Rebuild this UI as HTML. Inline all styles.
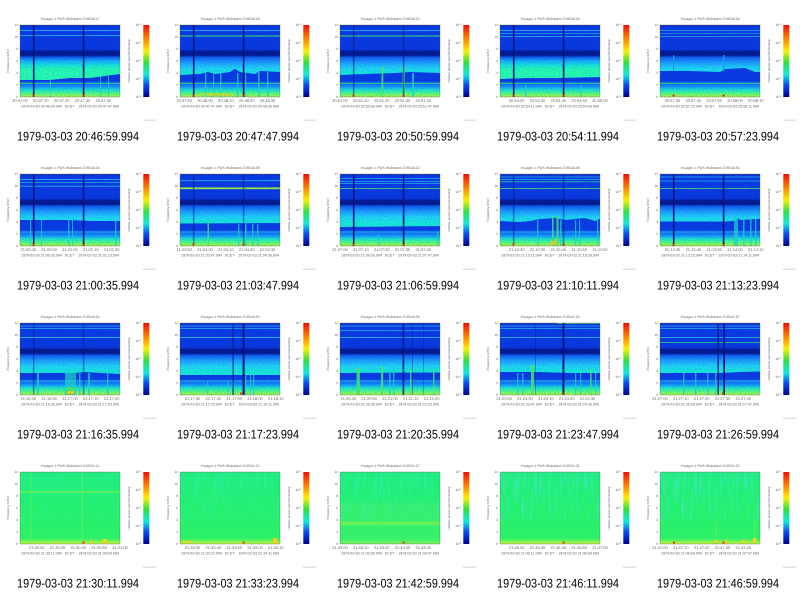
<!DOCTYPE html>
<html><head><meta charset="utf-8"><title>Voyager-1 PWS Wideband</title>
<style>
html,body{margin:0;padding:0;background:#fff;width:800px;height:596px;overflow:hidden}
svg{display:block}
svg svg{filter:blur(.38px)}
text{font-family:"Liberation Sans",sans-serif;text-rendering:geometricPrecision}
.f text,.f{font-size:3.2px;fill:#666}
text[y="20"]{font-size:3.44px}
text[y="102"]{font-size:4px}
text[y="107.5"]{font-size:3.65px}
.m{text-anchor:middle}
.e{text-anchor:end}
.cap{font-size:12.6px;fill:#000}
.s{fill:#20d8c8;opacity:.75}.g{fill:#50f060;opacity:.85}.l{fill:#30d8e0}.k{fill:#40f070}.y{fill:#a8f038}.o{fill:#f8d020}.r{fill:#f03010}.v{fill:#06107c}.c{fill:#18a0f0}
</style></head><body>
<svg width="800" height="596" viewBox="0 0 800 596" xmlns="http://www.w3.org/2000/svg">
<defs>
<linearGradient id="S" x1="0" y1="0" x2="0" y2="1"><stop offset="0" stop-color="#0620a8"/><stop offset=".03" stop-color="#0a38e8"/><stop offset=".34" stop-color="#0a34dc"/><stop offset=".37" stop-color="#05148c"/><stop offset=".42" stop-color="#05148c"/><stop offset=".45" stop-color="#1060f0"/><stop offset=".5" stop-color="#18b0ff"/><stop offset=".56" stop-color="#18e8d8"/><stop offset=".62" stop-color="#28ffb0"/><stop offset="1" stop-color="#28ffb0"/></linearGradient>
<linearGradient id="W" x1="0" y1="0" x2="0" y2="1"><stop offset="0" stop-color="#0620a8"/><stop offset=".03" stop-color="#0a38e8"/><stop offset=".34" stop-color="#0a34dc"/><stop offset=".37" stop-color="#05148c"/><stop offset=".42" stop-color="#05148c"/><stop offset=".45" stop-color="#1060f0"/><stop offset=".52" stop-color="#209cff"/><stop offset=".6" stop-color="#20d8f8"/><stop offset=".68" stop-color="#18ecd8"/><stop offset="1" stop-color="#18f4d0"/></linearGradient>
<linearGradient id="L" gradientUnits="userSpaceOnUse" x1="0" y1="0" x2="0" y2="72"><stop offset="0" stop-color="#0a34dc"/><stop offset=".77" stop-color="#0a38e4"/><stop offset=".85" stop-color="#148cff"/><stop offset=".9" stop-color="#20e4d0"/><stop offset=".94" stop-color="#44ff90"/><stop offset="1" stop-color="#b8ff30"/></linearGradient>
<linearGradient id="G" x1="0" y1="0" x2="0" y2="1"><stop offset="0" stop-color="#20ee80"/><stop offset=".5" stop-color="#24f070"/><stop offset=".92" stop-color="#2cf068"/><stop offset=".96" stop-color="#70f45c"/><stop offset="1" stop-color="#c4f430"/></linearGradient>
<linearGradient id="J" x1="0" y1="0" x2="0" y2="1"><stop offset="0" stop-color="#f01000"/><stop offset=".16" stop-color="#ff7000"/><stop offset=".36" stop-color="#f8f000"/><stop offset=".52" stop-color="#30e040"/><stop offset=".69" stop-color="#10e8e0"/><stop offset=".83" stop-color="#0850f0"/><stop offset="1" stop-color="#00008c"/></linearGradient>
<filter id="n" x="0" y="0" width="1" height="1"><feTurbulence type="fractalNoise" baseFrequency=".9" numOctaves="1" seed="4"/><feColorMatrix type="matrix" values="0 0 0 0 0 0 0 0 0 .1 0 0 0 0 .55 1 0 0 0 -.43"/></filter>
<filter id="h" x="0" y="0" width="1" height="1"><feTurbulence type="fractalNoise" baseFrequency=".45 .035" numOctaves="2" seed="7"/><feColorMatrix type="matrix" values="0 0 0 0 .1 0 0 0 0 .75 0 0 0 0 .9 2.4 0 0 0 -1.2"/></filter>
<rect id="N" width="100" height="72" filter="url(#n)"/>
<rect id="H" width="100" height="48" filter="url(#h)"/>
<g id="V"><rect class="v" x="12.9" width="1.6" height="72"/><rect class="v" x="62.8" width="1.6" height="72"/></g>
<g id="D"><rect class="r" x="12.5" y="69.5" width="2" height="2"/><rect class="r" x="62.5" y="69.5" width="2.2" height="2"/></g>
<g id="A" class="f">
<rect x="20" y="25" width="100" height="72" fill="none" stroke="#555" stroke-width=".3"/>
<path d="M20 25.2H120M20 96.8H120" stroke="#888" stroke-width=".8" stroke-dasharray=".5 1.58" fill="none"/>
<text class="e" x="18" y="98">0</text><text class="e" x="18" y="86">2</text><text class="e" x="18" y="74">4</text><text class="e" x="18" y="62">6</text><text class="e" x="18" y="50">8</text><text class="e" x="18" y="38">10</text><text class="e" x="18" y="26">12</text>
<text class="m" transform="translate(9,61) rotate(-90)">Frequency (kHz)</text>
<text class="m" transform="translate(130,61) rotate(-90)">relative power spectral density</text>
<rect x="143.3" y="25" width="6" height="72" fill="url(#J)"/>
<text class="e" x="141" y="26">10<tspan dy="-1" font-size="2.3">-1</tspan></text><text class="e" x="141" y="44">10<tspan dy="-1" font-size="2.3">-2</tspan></text><text class="e" x="141" y="62">10<tspan dy="-1" font-size="2.3">-3</tspan></text><text class="e" x="141" y="80">10<tspan dy="-1" font-size="2.3">-4</tspan></text><text class="e" x="141" y="98">10<tspan dy="-1" font-size="2.3">-5</tspan></text>
<text x="143" y="120.5" style="font-size:1.5px" textLength="13" lengthAdjust="spacingAndGlyphs">www-pw.physics.uiowa.edu</text>
</g>
</defs>
<rect width="800" height="596" fill="#fff"/>

<!-- ROW 1 -->
<g transform="translate(0,0)"><svg x="20" y="25" width="100" height="72" viewBox="0 0 100 72"><rect width="100" height="72" fill="url(#S)"/><polygon points="0,55 30,55 50,53 70,53 85,51 100,49 100,72 0,72" fill="url(#L)"/><rect class="s" x="80" y="51" width="1" height="21"/><rect class="s" x="88" y="51" width="1" height="21"/><rect class="s" x="30" y="55" width="1" height="17"/><rect class="k" y="57.8" width="100" height=".9"/><rect class="l" y="5" width="100" height=".7"/><rect class="l" y="10" width="100" height=".7"/><use href="#V"/><use href="#D"/><use href="#N"/></svg><use href="#A"/><g class="f"><text class="m" x="70" y="20">Voyager-1 PWS Wideband 2/16540:17</text><text class="m" x="20" y="102">20:47:00</text><text class="m" x="40.8" y="102">20:47:10</text><text class="m" x="61.7" y="102">20:47:20</text><text class="m" x="82.5" y="102">20:47:30</text><text class="m" x="103.3" y="102">20:47:40</text><text x="21" y="107.5">1979-03-03 20:46:59.994</text><text class="m" x="69.5" y="107.5">SCET</text><text class="e" x="119" y="107.5">1979-03-03 20:47:47.994</text></g><text class="cap" x="17" y="140.5" textLength="122" lengthAdjust="spacingAndGlyphs">1979-03-03 20:46:59.994</text></g>

<g transform="translate(160,0)"><svg x="20" y="25" width="100" height="72" viewBox="0 0 100 72"><rect width="100" height="72" fill="url(#W)"/><polygon points="0,50 20,49 28,47 35,49 50,47 55,44 60,47 75,49 80,46 100,47 100,72 0,72" fill="url(#L)"/><rect class="s" x="25" y="48" width="1.4" height="24"/><rect class="s" x="33" y="48" width="1.2" height="24"/><rect class="s" x="40" y="48" width="1.4" height="24"/><rect class="s" x="57" y="48" width="1.6" height="24"/><rect class="s" x="65" y="48" width="1.2" height="24"/><rect class="s" x="78" y="47" width="1.6" height="25"/><rect class="s" x="87" y="47" width="1.4" height="25"/><rect class="k" y="57.8" width="100" height=".9"/><rect class="l" y="5" width="100" height=".7"/><rect class="k" y="10.5" width="100" height="1"/><rect class="y" x="18" y="68" width="36" height="2"/><rect class="o" x="30" y="69.5" width="20" height="1"/><use href="#V"/><use href="#D"/><use href="#N"/></svg><use href="#A"/><g class="f"><text class="m" x="70" y="20">Voyager-1 PWS Wideband 2/16540:18</text><text class="m" x="24.2" y="102">20:47:50</text><text class="m" x="45" y="102">20:48:00</text><text class="m" x="65.9" y="102">20:48:10</text><text class="m" x="86.7" y="102">20:48:20</text><text class="m" x="107.5" y="102">20:48:30</text><text x="21" y="107.5">1979-03-03 20:47:47.994</text><text class="m" x="69.5" y="107.5">SCET</text><text class="e" x="119" y="107.5">1979-03-03 20:48:35.994</text></g><text class="cap" x="17" y="140.5" textLength="122" lengthAdjust="spacingAndGlyphs">1979-03-03 20:47:47.994</text></g>

<g transform="translate(320,0)"><svg x="20" y="25" width="100" height="72" viewBox="0 0 100 72"><rect width="100" height="72" fill="url(#W)"/><polygon points="0,50 25,49 55,48 70,47 100,48 100,72 0,72" fill="url(#L)"/><rect class="g" x="41.5" y="42" width="1.8" height="30"/><rect class="g" x="62.5" y="42" width="2.4" height="30"/><rect class="s" x="72" y="48" width="2" height="24"/><rect class="k" y="57.8" width="100" height=".9"/><rect class="l" y="5" width="100" height=".7"/><rect class="k" y="10.5" width="100" height="1"/><use href="#V" opacity=".5"/><use href="#D"/><use href="#N"/></svg><use href="#A"/><g class="f"><text class="m" x="70" y="20">Voyager-1 PWS Wideband 2/16540:22</text><text class="m" x="20" y="102">20:51:00</text><text class="m" x="40.8" y="102">20:51:10</text><text class="m" x="61.7" y="102">20:51:20</text><text class="m" x="82.5" y="102">20:51:30</text><text class="m" x="103.3" y="102">20:51:40</text><text x="21" y="107.5">1979-03-03 20:50:59.994</text><text class="m" x="69.5" y="107.5">SCET</text><text class="e" x="119" y="107.5">1979-03-03 20:51:47.994</text></g><text class="cap" x="17" y="140.5" textLength="122" lengthAdjust="spacingAndGlyphs">1979-03-03 20:50:59.994</text></g>

<g transform="translate(480,0)"><svg x="20" y="25" width="100" height="72" viewBox="0 0 100 72"><rect width="100" height="72" fill="url(#S)"/><polygon points="0,54 30,53 60,53 100,52 100,72 0,72" fill="url(#L)"/><rect class="s" x="25" y="60" width="1.6" height="12"/><rect class="s" x="80" y="60" width="1.2" height="12"/><rect class="k" y="57.8" width="100" height=".9"/><rect class="l" y="5" width="100" height=".7"/><rect class="l" y="8" width="100" height=".6"/><rect class="l" y="11" width="100" height=".7"/><use href="#V"/><use href="#D"/><use href="#N"/></svg><use href="#A"/><g class="f"><text class="m" x="70" y="20">Voyager-1 PWS Wideband 2/16540:26</text><text class="m" x="36.7" y="102">20:54:20</text><text class="m" x="57.5" y="102">20:54:30</text><text class="m" x="78.3" y="102">20:54:40</text><text class="m" x="99.2" y="102">20:54:50</text><text class="m" x="120" y="102">20:55:00</text><text x="21" y="107.5">1979-03-03 20:54:11.994</text><text class="m" x="69.5" y="107.5">SCET</text><text class="e" x="119" y="107.5">1979-03-03 20:54:59.994</text></g><text class="cap" x="17" y="140.5" textLength="122" lengthAdjust="spacingAndGlyphs">1979-03-03 20:54:11.994</text></g>

<g transform="translate(640,0)"><svg x="20" y="25" width="100" height="72" viewBox="0 0 100 72"><rect width="100" height="72" fill="url(#W)"/><polygon points="0,46 30,46 60,47 65,44 85,43 95,47 100,47 100,72 0,72" fill="url(#L)"/><rect class="k" y="57.8" width="100" height=".9"/><rect class="l" y="5" width="100" height=".6"/><rect class="l" y="8" width="100" height=".5"/><rect class="l" y="11" width="100" height=".6"/><rect class="c" x="13" y="30" width="1.2" height="16"/><rect class="c" x="63" y="30" width="1.4" height="16"/><use href="#D"/><use href="#N"/></svg><use href="#A"/><g class="f"><text class="m" x="70" y="20">Voyager-1 PWS Wideband 2/16540:30</text><text class="m" x="32.5" y="102">20:57:30</text><text class="m" x="53.3" y="102">20:57:40</text><text class="m" x="74.2" y="102">20:57:50</text><text class="m" x="95" y="102">20:58:00</text><text class="m" x="115.8" y="102">20:58:10</text><text x="21" y="107.5">1979-03-03 20:57:23.994</text><text class="m" x="69.5" y="107.5">SCET</text><text class="e" x="119" y="107.5">1979-03-03 20:58:11.994</text></g><text class="cap" x="17" y="140.5" textLength="122" lengthAdjust="spacingAndGlyphs">1979-03-03 20:57:23.994</text></g>

<!-- ROW 2 -->
<g transform="translate(0,149)"><svg x="20" y="25" width="100" height="72" viewBox="0 0 100 72"><rect width="100" height="72" fill="url(#W)"/><polygon points="0,46 50,46 70,47 100,47 100,72 0,72" fill="url(#L)"/><rect class="s" x="10" y="46" width="1.2" height="26"/><rect class="s" x="21" y="46" width="1" height="26"/><rect class="s" x="48" y="46" width="1.4" height="26"/><rect class="s" x="52" y="46" width="1" height="26"/><rect class="s" x="95" y="46" width="1.4" height="26"/><rect class="l" y="57.6" width="100" height=".8"/><rect class="l" y="5.3" width="100" height=".7"/><rect class="l" y="8" width="100" height=".6"/><rect class="l" y="11.8" width="100" height=".7"/><use href="#V"/><use href="#D"/><use href="#N"/></svg><use href="#A"/><g class="f"><text class="m" x="70" y="20">Voyager-1 PWS Wideband 2/16540:34</text><text class="m" x="28.3" y="102">21:00:40</text><text class="m" x="49.2" y="102">21:00:50</text><text class="m" x="70" y="102">21:01:00</text><text class="m" x="90.8" y="102">21:01:10</text><text class="m" x="111.7" y="102">21:01:20</text><text x="21" y="107.5">1979-03-03 21:00:35.994</text><text class="m" x="69.5" y="107.5">SCET</text><text class="e" x="119" y="107.5">1979-03-03 21:01:23.994</text></g><text class="cap" x="17" y="140.5" textLength="122" lengthAdjust="spacingAndGlyphs">1979-03-03 21:00:35.994</text></g>

<g transform="translate(160,149)"><svg x="20" y="25" width="100" height="72" viewBox="0 0 100 72"><rect width="100" height="72" fill="url(#W)"/><polygon points="0,49.5 100,49 100,72 0,72" fill="url(#L)"/><rect class="g" x="27.5" y="46" width="1.5" height="26"/><rect class="s" x="58" y="50" width="1.4" height="22"/><rect class="s" x="65" y="46" width="1.6" height="26"/><rect class="s" x="72" y="50" width="1.4" height="22"/><rect class="s" x="77" y="50" width="1.4" height="22"/><rect class="l" y="57.6" width="100" height=".8"/><rect class="l" y="6.4" width="100" height=".7"/><rect class="y" y="13.4" width="100" height="1.8"/><use href="#V" opacity=".45"/><use href="#D"/><use href="#N"/></svg><use href="#A"/><g class="f"><text class="m" x="70" y="20">Voyager-1 PWS Wideband 2/16540:38</text><text class="m" x="24.2" y="102">21:03:50</text><text class="m" x="45" y="102">21:04:00</text><text class="m" x="65.9" y="102">21:04:10</text><text class="m" x="86.7" y="102">21:04:20</text><text class="m" x="107.5" y="102">21:04:30</text><text x="21" y="107.5">1979-03-03 21:03:47.994</text><text class="m" x="69.5" y="107.5">SCET</text><text class="e" x="119" y="107.5">1979-03-03 21:04:35.994</text></g><text class="cap" x="17" y="140.5" textLength="122" lengthAdjust="spacingAndGlyphs">1979-03-03 21:03:47.994</text></g>

<g transform="translate(320,149)"><svg x="20" y="25" width="100" height="72" viewBox="0 0 100 72"><rect width="100" height="72" fill="url(#W)"/><polygon points="0,53 100,52 100,72 0,72" fill="url(#L)"/><rect class="s" x="38" y="60" width="1.2" height="12"/><rect class="s" x="97" y="58" width="1.4" height="14"/><rect class="l" y="57.6" width="100" height=".8"/><rect class="l" y="4.3" width="100" height=".6"/><rect class="l" y="7" width="100" height=".6"/><rect class="l" y="9.3" width="100" height=".6"/><rect class="k" y="14" width="100" height=".8"/><use href="#V"/><use href="#D"/><use href="#N"/></svg><use href="#A"/><g class="f"><text class="m" x="70" y="20">Voyager-1 PWS Wideband 2/16540:42</text><text class="m" x="20" y="102">21:07:00</text><text class="m" x="40.8" y="102">21:07:10</text><text class="m" x="61.7" y="102">21:07:20</text><text class="m" x="82.5" y="102">21:07:30</text><text class="m" x="103.3" y="102">21:07:40</text><text x="21" y="107.5">1979-03-03 21:06:59.994</text><text class="m" x="69.5" y="107.5">SCET</text><text class="e" x="119" y="107.5">1979-03-03 21:07:47.994</text></g><text class="cap" x="17" y="140.5" textLength="122" lengthAdjust="spacingAndGlyphs">1979-03-03 21:06:59.994</text></g>

<g transform="translate(480,149)"><svg x="20" y="25" width="100" height="72" viewBox="0 0 100 72"><rect width="100" height="72" fill="url(#W)"/><polygon points="0,47 20,48 30,47 40,45 55,44 65,46 85,44 95,47 100,45 100,72 0,72" fill="url(#L)"/><rect class="s" x="37" y="46" width="1.4" height="26"/><rect class="g" x="52" y="42" width="1.6" height="30"/><rect class="g" x="56.5" y="42" width="2" height="30"/><rect class="s" x="60" y="46" width="1.6" height="26"/><rect class="s" x="75" y="46" width="1.2" height="26"/><rect class="s" x="79" y="46" width="1.2" height="26"/><rect class="s" x="97" y="46" width="1.2" height="26"/><rect class="l" y="57.6" width="100" height=".8"/><rect class="l" y="2.7" width="100" height=".6"/><rect class="l" y="5.3" width="100" height=".6"/><rect class="k" y="7.5" width="100" height=".7"/><rect class="k" y="14" width="100" height=".8"/><rect class="o" x="51" y="67" width="3" height="4"/><rect class="o" x="55" y="65" width="2" height="6"/><use href="#V" opacity=".45"/><use href="#D"/><use href="#N"/></svg><use href="#A"/><g class="f"><text class="m" x="70" y="20">Voyager-1 PWS Wideband 2/16540:46</text><text class="m" x="36.7" y="102">21:10:20</text><text class="m" x="57.5" y="102">21:10:30</text><text class="m" x="78.3" y="102">21:10:40</text><text class="m" x="99.2" y="102">21:10:50</text><text class="m" x="120" y="102">21:11:00</text><text x="21" y="107.5">1979-03-03 21:10:11.994</text><text class="m" x="69.5" y="107.5">SCET</text><text class="e" x="119" y="107.5">1979-03-03 21:10:59.994</text></g><text class="cap" x="17" y="140.5" textLength="122" lengthAdjust="spacingAndGlyphs">1979-03-03 21:10:11.994</text></g>

<g transform="translate(640,149)"><svg x="20" y="25" width="100" height="72" viewBox="0 0 100 72"><rect width="100" height="72" fill="url(#W)"/><polygon points="0,47.5 65,47.5 75,47 78,44 80,46 100,45 100,72 0,72" fill="url(#L)"/><rect class="s" x="74" y="44" width="4" height="28"/><rect class="s" x="83" y="44" width="1.6" height="28"/><rect class="s" x="90" y="44" width="1.6" height="28"/><rect class="s" x="95" y="44" width="1.4" height="28"/><rect class="l" y="57.6" width="100" height=".8"/><rect class="l" y="2.7" width="100" height=".6"/><rect class="l" y="6.7" width="100" height=".6"/><rect class="k" y="14" width="100" height=".8"/><use href="#V"/><use href="#D"/><use href="#N"/></svg><use href="#A"/><g class="f"><text class="m" x="70" y="20">Voyager-1 PWS Wideband 2/16540:50</text><text class="m" x="32.5" y="102">21:13:30</text><text class="m" x="53.3" y="102">21:13:40</text><text class="m" x="74.2" y="102">21:13:50</text><text class="m" x="95" y="102">21:14:00</text><text class="m" x="115.8" y="102">21:14:10</text><text x="21" y="107.5">1979-03-03 21:13:23.994</text><text class="m" x="69.5" y="107.5">SCET</text><text class="e" x="119" y="107.5">1979-03-03 21:14:11.994</text></g><text class="cap" x="17" y="140.5" textLength="122" lengthAdjust="spacingAndGlyphs">1979-03-03 21:13:23.994</text></g>

<!-- ROW 3 -->
<g transform="translate(0,298)"><svg x="20" y="25" width="100" height="72" viewBox="0 0 100 72"><rect width="100" height="72" fill="url(#W)"/><polygon points="0,50 55,50 65,49 100,51 100,72 0,72" fill="url(#L)"/><rect class="s" x="17" y="50" width="2" height="22"/><rect class="s" x="45" y="50" width="11" height="22"/><rect class="s" x="59" y="50" width="1.4" height="22"/><rect class="s" x="68" y="50" width="2" height="22"/><rect class="s" x="87" y="50" width="1.4" height="22"/><rect class="l" y="57.6" width="100" height=".8"/><rect class="l" y="2.7" width="100" height=".6"/><rect class="l" y="5.3" width="100" height=".6"/><rect class="l" y="14" width="100" height=".8"/><rect class="g" x="46" y="64" width="9" height="8"/><rect class="o" x="47" y="68" width="7" height="3"/><use href="#V" opacity=".4"/><use href="#N"/></svg><use href="#A"/><g class="f"><text class="m" x="70" y="20">Voyager-1 PWS Wideband 2/16540:54</text><text class="m" x="28.3" y="102">21:16:40</text><text class="m" x="49.2" y="102">21:16:50</text><text class="m" x="70" y="102">21:17:00</text><text class="m" x="90.8" y="102">21:17:10</text><text class="m" x="111.7" y="102">21:17:20</text><text x="21" y="107.5">1979-03-03 21:16:35.994</text><text class="m" x="69.5" y="107.5">SCET</text><text class="e" x="119" y="107.5">1979-03-03 21:17:23.994</text></g><text class="cap" x="17" y="140.5" textLength="122" lengthAdjust="spacingAndGlyphs">1979-03-03 21:16:35.994</text></g>

<g transform="translate(160,298)"><svg x="20" y="25" width="100" height="72" viewBox="0 0 100 72"><rect width="100" height="72" fill="url(#W)"/><polygon points="0,52 100,52 100,72 0,72" fill="url(#L)"/><rect class="s" x="27" y="58" width="1.2" height="14"/><rect class="s" x="47" y="58" width="1.2" height="14"/><rect class="s" x="52" y="58" width="1.2" height="14"/><rect class="s" x="65" y="52" width="1.4" height="20"/><rect class="s" x="70" y="52" width="1.2" height="20"/><rect class="s" x="73" y="52" width="1.2" height="20"/><rect class="l" y="57.6" width="100" height=".8"/><rect class="l" y="2.7" width="100" height=".6"/><rect class="l" y="5.3" width="100" height=".6"/><rect class="l" y="14" width="100" height=".8"/><rect class="v" x="52.5" width="1.2" height="72" opacity=".8"/><rect class="v" x="62.5" width="2.2" height="72" opacity=".9"/><rect class="r" x="60" y="69.5" width="3" height="2"/><use href="#N"/></svg><use href="#A"/><g class="f"><text class="m" x="70" y="20">Voyager-1 PWS Wideband 2/16540:55</text><text class="m" x="32.5" y="102">21:17:30</text><text class="m" x="53.3" y="102">21:17:40</text><text class="m" x="74.2" y="102">21:17:50</text><text class="m" x="95" y="102">21:18:00</text><text class="m" x="115.8" y="102">21:18:10</text><text x="21" y="107.5">1979-03-03 21:17:23.994</text><text class="m" x="69.5" y="107.5">SCET</text><text class="e" x="119" y="107.5">1979-03-03 21:18:11.994</text></g><text class="cap" x="17" y="140.5" textLength="122" lengthAdjust="spacingAndGlyphs">1979-03-03 21:17:23.994</text></g>

<g transform="translate(320,298)"><svg x="20" y="25" width="100" height="72" viewBox="0 0 100 72"><rect width="100" height="72" fill="url(#W)"/><polygon points="0,50 100,49.5 100,72 0,72" fill="url(#L)"/><rect class="g" x="16.5" y="45" width="3.4" height="27"/><rect class="g" x="41" y="43" width="2.2" height="29"/><rect class="s" x="49" y="48" width="1.6" height="24"/><rect class="s" x="53" y="48" width="1.4" height="24"/><rect class="g" x="70" y="46" width="1.4" height="26"/><rect class="g" x="93" y="46" width="1.4" height="26"/><rect class="l" y="57.6" width="100" height=".8"/><rect class="l" y="2.7" width="100" height=".6"/><rect class="l" y="7" width="100" height=".6"/><rect class="l" y="14" width="100" height=".7"/><rect class="v" x="62.5" width="1.8" height="72" opacity=".8"/><rect class="v" x="72" width="1" height="72" opacity=".35"/><rect class="v" x="83" width="1" height="72" opacity=".3"/><use href="#N"/></svg><use href="#A"/><g class="f"><text class="m" x="70" y="20">Voyager-1 PWS Wideband 2/16540:59</text><text class="m" x="28.3" y="102">21:20:40</text><text class="m" x="49.2" y="102">21:20:50</text><text class="m" x="70" y="102">21:21:00</text><text class="m" x="90.8" y="102">21:21:10</text><text class="m" x="111.7" y="102">21:21:20</text><text x="21" y="107.5">1979-03-03 21:20:35.994</text><text class="m" x="69.5" y="107.5">SCET</text><text class="e" x="119" y="107.5">1979-03-03 21:21:23.994</text></g><text class="cap" x="17" y="140.5" textLength="122" lengthAdjust="spacingAndGlyphs">1979-03-03 21:20:35.994</text></g>

<g transform="translate(480,298)"><svg x="20" y="25" width="100" height="72" viewBox="0 0 100 72"><rect width="100" height="72" fill="url(#W)"/><polygon points="0,49 40,49 70,50 100,50 100,72 0,72" fill="url(#L)"/><rect class="g" x="31" y="42" width="3" height="30"/><rect class="s" x="17" y="50" width="1.4" height="22"/><rect class="s" x="22" y="50" width="1.4" height="22"/><rect class="s" x="75" y="50" width="1.2" height="22"/><rect class="s" x="80" y="50" width="1.2" height="22"/><rect class="g" x="90" y="46" width="1.6" height="26"/><rect class="s" x="95" y="50" width="1.2" height="22"/><rect class="k" x="57" y="0" width="43" height=".8"/><rect class="l" y="57.6" width="100" height=".8"/><rect class="l" y="2.7" width="100" height=".6"/><rect class="l" y="5.3" width="100" height=".6"/><rect class="l" y="14" width="100" height=".7"/><rect class="v" x="62.5" width="1.9" height="72"/><rect class="v" x="35" width="1" height="72" opacity=".35"/><rect class="r" x="62" y="69.5" width="2" height="2"/><use href="#N"/></svg><use href="#A"/><g class="f"><text class="m" x="70" y="20">Voyager-1 PWS Wideband 2/16541:03</text><text class="m" x="24.2" y="102">21:23:50</text><text class="m" x="45" y="102">21:24:00</text><text class="m" x="65.9" y="102">21:24:10</text><text class="m" x="86.7" y="102">21:24:20</text><text class="m" x="107.5" y="102">21:24:30</text><text x="21" y="107.5">1979-03-03 21:23:47.994</text><text class="m" x="69.5" y="107.5">SCET</text><text class="e" x="119" y="107.5">1979-03-03 21:24:35.994</text></g><text class="cap" x="17" y="140.5" textLength="122" lengthAdjust="spacingAndGlyphs">1979-03-03 21:23:47.994</text></g>

<g transform="translate(640,298)"><svg x="20" y="25" width="100" height="72" viewBox="0 0 100 72"><rect width="100" height="72" fill="url(#W)"/><polygon points="0,50 60,50 80,49 100,48.5 100,72 0,72" fill="url(#L)"/><rect class="s" x="23" y="50" width="1.4" height="22"/><rect class="s" x="35" y="50" width="1.4" height="22"/><rect class="s" x="47" y="50" width="1.4" height="22"/><rect class="s" x="55" y="50" width="1.4" height="22"/><rect class="l" y="57.6" width="100" height=".8"/><rect class="l" y="2.7" width="100" height=".6"/><rect class="l" y="5.3" width="100" height=".6"/><rect class="l" y="14" width="100" height=".7"/><rect class="k" y="19" width="100" height=".7"/><rect class="l" x="64" y="45" width="36" height=".6"/><rect class="v" x="57.5" width="1.4" height="72" opacity=".85"/><rect class="v" x="63.3" width="1.7" height="72"/><rect class="r" x="62" y="69.5" width="2" height="2"/><use href="#N"/></svg><use href="#A"/><g class="f"><text class="m" x="70" y="20">Voyager-1 PWS Wideband 2/16541:07</text><text class="m" x="20" y="102">21:27:00</text><text class="m" x="40.8" y="102">21:27:10</text><text class="m" x="61.7" y="102">21:27:20</text><text class="m" x="82.5" y="102">21:27:30</text><text class="m" x="103.3" y="102">21:27:40</text><text x="21" y="107.5">1979-03-03 21:26:59.994</text><text class="m" x="69.5" y="107.5">SCET</text><text class="e" x="119" y="107.5">1979-03-03 21:27:47.994</text></g><text class="cap" x="17" y="140.5" textLength="122" lengthAdjust="spacingAndGlyphs">1979-03-03 21:26:59.994</text></g>

<!-- ROW 4 -->
<g transform="translate(0,447)"><svg x="20" y="25" width="100" height="72" viewBox="0 0 100 72"><rect width="100" height="72" fill="url(#G)"/><rect class="y" y="19.6" width="100" height="1" opacity=".8"/><rect x="10" width="1.4" height="72" fill="#70f060" opacity=".45"/><rect x="61.5" width="1.4" height="72" fill="#70f060" opacity=".45"/><rect class="o" x="83" y="67" width="4" height="5"/><rect class="o" x="70" y="68" width="2" height="3"/><rect class="o" x="37" y="69" width="2" height="2"/><rect class="r" x="62.5" y="69.5" width="2" height="2"/><use href="#H" opacity=".2"/></svg><use href="#A"/><g class="f"><text class="m" x="70" y="20">Voyager-1 PWS Wideband 2/16541:11</text><text class="m" x="36.7" y="102">21:30:20</text><text class="m" x="57.5" y="102">21:30:30</text><text class="m" x="78.3" y="102">21:30:40</text><text class="m" x="99.2" y="102">21:30:50</text><text class="m" x="120" y="102">21:31:00</text><text x="21" y="107.5">1979-03-03 21:30:11.994</text><text class="m" x="69.5" y="107.5">SCET</text><text class="e" x="119" y="107.5">1979-03-03 21:30:59.994</text></g><text class="cap" x="17" y="140.5" textLength="122" lengthAdjust="spacingAndGlyphs">1979-03-03 21:30:11.994</text></g>

<g transform="translate(160,447)"><svg x="20" y="25" width="100" height="72" viewBox="0 0 100 72"><rect width="100" height="72" fill="url(#G)"/><rect class="o" x="93" y="66" width="4" height="6"/><rect class="o" x="3" y="69" width="10" height="1.5"/><rect class="r" x="62.5" y="69.5" width="2" height="2"/><use href="#H" opacity=".4"/></svg><use href="#A"/><g class="f"><text class="m" x="70" y="20">Voyager-1 PWS Wideband 2/16541:15</text><text class="m" x="32.5" y="102">21:33:30</text><text class="m" x="53.3" y="102">21:33:40</text><text class="m" x="74.2" y="102">21:33:50</text><text class="m" x="95" y="102">21:34:00</text><text class="m" x="115.8" y="102">21:34:10</text><text x="21" y="107.5">1979-03-03 21:33:23.994</text><text class="m" x="69.5" y="107.5">SCET</text><text class="e" x="119" y="107.5">1979-03-03 21:34:11.994</text></g><text class="cap" x="17" y="140.5" textLength="122" lengthAdjust="spacingAndGlyphs">1979-03-03 21:33:23.994</text></g>

<g transform="translate(320,447)"><svg x="20" y="25" width="100" height="72" viewBox="0 0 100 72"><rect width="100" height="72" fill="url(#G)"/><rect y="31" width="100" height="41" fill="#40f070" opacity=".55"/><rect class="y" y="49.5" width="100" height="3.5" opacity=".45"/><rect class="r" x="62.5" y="69.5" width="2" height="2"/><use href="#H" opacity=".45"/></svg><use href="#A"/><g class="f"><text class="m" x="70" y="20">Voyager-1 PWS Wideband 2/16541:27</text><text class="m" x="20" y="102">21:43:00</text><text class="m" x="40.8" y="102">21:43:10</text><text class="m" x="61.7" y="102">21:43:20</text><text class="m" x="82.5" y="102">21:43:30</text><text class="m" x="103.3" y="102">21:43:40</text><text x="21" y="107.5">1979-03-03 21:42:59.994</text><text class="m" x="69.5" y="107.5">SCET</text><text class="e" x="119" y="107.5">1979-03-03 21:43:47.994</text></g><text class="cap" x="17" y="140.5" textLength="122" lengthAdjust="spacingAndGlyphs">1979-03-03 21:42:59.994</text></g>

<g transform="translate(480,447)"><svg x="20" y="25" width="100" height="72" viewBox="0 0 100 72"><rect width="100" height="72" fill="url(#G)"/><rect class="r" x="62.5" y="69.5" width="2" height="2"/><use href="#H" opacity=".7"/></svg><use href="#A"/><g class="f"><text class="m" x="70" y="20">Voyager-1 PWS Wideband 2/16541:31</text><text class="m" x="36.7" y="102">21:46:20</text><text class="m" x="57.5" y="102">21:46:30</text><text class="m" x="78.3" y="102">21:46:40</text><text class="m" x="99.2" y="102">21:46:50</text><text class="m" x="120" y="102">21:47:00</text><text x="21" y="107.5">1979-03-03 21:46:11.994</text><text class="m" x="69.5" y="107.5">SCET</text><text class="e" x="119" y="107.5">1979-03-03 21:46:59.994</text></g><text class="cap" x="17" y="140.5" textLength="122" lengthAdjust="spacingAndGlyphs">1979-03-03 21:46:11.994</text></g>

<g transform="translate(640,447)"><svg x="20" y="25" width="100" height="72" viewBox="0 0 100 72"><rect width="100" height="72" fill="url(#G)"/><rect class="g" x="55" y="50" width="1.6" height="22"/><rect class="g" x="94" y="46" width="1.6" height="26"/><rect class="o" x="54" y="68" width="3" height="3"/><rect class="o" x="65" y="68" width="2" height="3"/><rect class="o" x="82" y="68" width="3" height="3"/><rect class="o" x="93" y="66" width="3" height="5"/><rect class="r" x="13" y="69.5" width="2" height="2"/><rect class="r" x="62.5" y="69.5" width="2" height="2"/><use href="#H" opacity=".7"/></svg><use href="#A"/><g class="f"><text class="m" x="70" y="20">Voyager-1 PWS Wideband 2/16541:32</text><text class="m" x="20" y="102">21:47:00</text><text class="m" x="40.8" y="102">21:47:10</text><text class="m" x="61.7" y="102">21:47:20</text><text class="m" x="82.5" y="102">21:47:30</text><text class="m" x="103.3" y="102">21:47:40</text><text x="21" y="107.5">1979-03-03 21:46:59.994</text><text class="m" x="69.5" y="107.5">SCET</text><text class="e" x="119" y="107.5">1979-03-03 21:47:47.994</text></g><text class="cap" x="17" y="140.5" textLength="122" lengthAdjust="spacingAndGlyphs">1979-03-03 21:46:59.994</text></g>
</svg>
</body></html>
